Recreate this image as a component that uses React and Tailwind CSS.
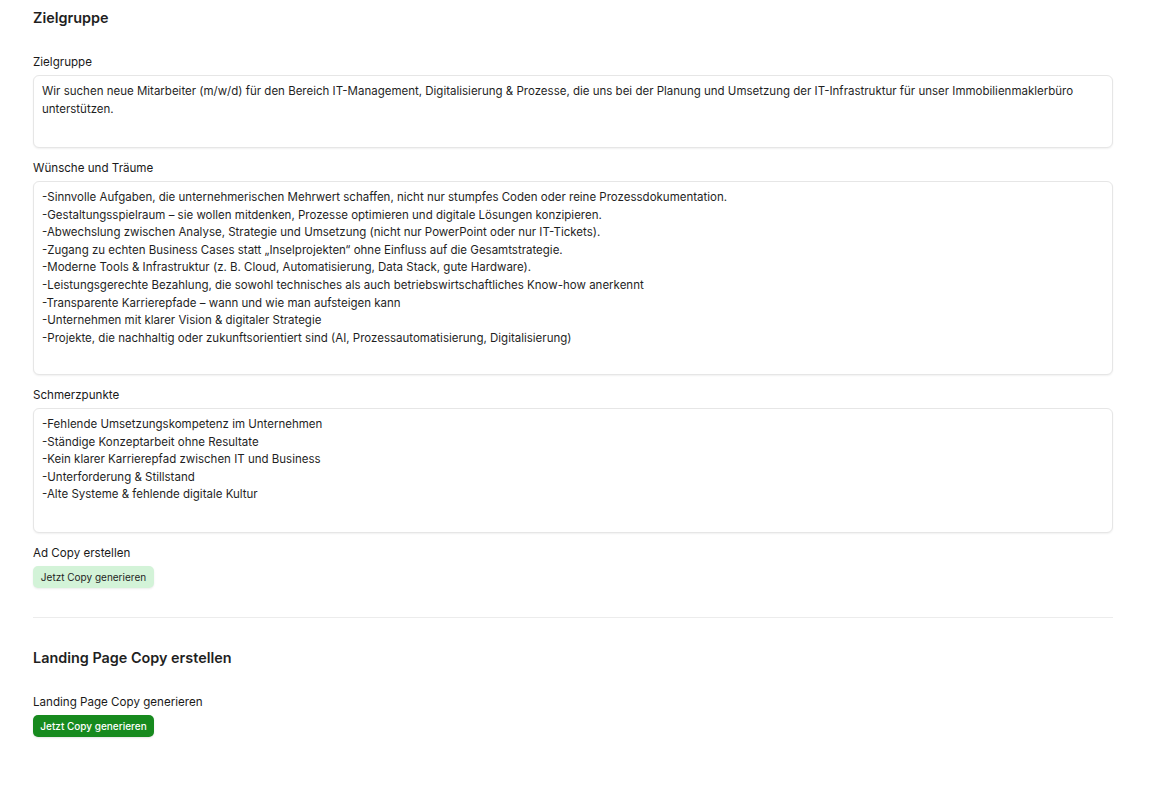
import React from "react";

const wuensche = [
  "-Sinnvolle Aufgaben, die unternehmerischen Mehrwert schaffen, nicht nur stumpfes Coden oder reine Prozessdokumentation.",
  "-Gestaltungsspielraum – sie wollen mitdenken, Prozesse optimieren und digitale Lösungen konzipieren.",
  "-Abwechslung zwischen Analyse, Strategie und Umsetzung (nicht nur PowerPoint oder nur IT-Tickets).",
  "-Zugang zu echten Business Cases statt „Inselprojekten“ ohne Einfluss auf die Gesamtstrategie.",
  "-Moderne Tools & Infrastruktur (z. B. Cloud, Automatisierung, Data Stack, gute Hardware).",
  "-Leistungsgerechte Bezahlung, die sowohl technisches als auch betriebswirtschaftliches Know-how anerkennt",
  "-Transparente Karrierepfade – wann und wie man aufsteigen kann",
  "-Unternehmen mit klarer Vision & digitaler Strategie",
  "-Projekte, die nachhaltig oder zukunftsorientiert sind (AI, Prozessautomatisierung, Digitalisierung)",
];

const schmerz = [
  "-Fehlende Umsetzungskompetenz im Unternehmen",
  "-Ständige Konzeptarbeit ohne Resultate",
  "-Kein klarer Karrierepfad zwischen IT und Business",
  "-Unterforderung & Stillstand",
  "-Alte Systeme & fehlende digitale Kultur",
];

function Label({ children }) {
  return <div className="text-[11.6px] leading-[16px] text-[#1a1a1a]">{children}</div>;
}

function Box({ lines, h }) {
  return (
    <div
      className={`mt-[5px] w-full rounded-[6px] border border-[#e6e6e6] bg-white px-[8px] py-[7px] shadow-[0_1px_2px_rgba(0,0,0,0.06)] text-[11.5px] leading-[17.6px] text-[#1f1f1f] ${h}`}
    >
      {lines.map((l, i) => (
        <div key={i}>{l}</div>
      ))}
    </div>
  );
}

export default function App() {
  return (
    <div
      className="min-h-[801px] bg-white pl-[33px] pr-[50px] pt-[9px]"
      style={{ fontFamily: "Inter, 'Noto Sans', sans-serif" }}
    >
      <div className="w-[1080px]">
        <h2 className="text-[14.4px] leading-[18px] font-semibold text-[#1f1f1f]">Zielgruppe</h2>

        <div className="mt-[27px]">
          <Label>Zielgruppe</Label>
          <Box
            h="h-[73px]"
            lines={[
              "Wir suchen neue Mitarbeiter (m/w/d) für den Bereich IT-Management, Digitalisierung & Prozesse, die uns bei der Planung und Umsetzung der IT-Infrastruktur für unser Immobilienmaklerbüro unterstützen.",
            ]}
          />
        </div>

        <div className="mt-[12px]">
          <Label>Wünsche und Träume</Label>
          <Box h="h-[194px]" lines={wuensche} />
        </div>

        <div className="mt-[12px]">
          <Label>Schmerzpunkte</Label>
          <Box h="h-[125px]" lines={schmerz} />
        </div>

        <div className="mt-[12px]">
          <Label>Ad Copy erstellen</Label>
          <button className="mt-[5px] flex h-[22px] w-[121px] items-center justify-center rounded-[5px] bg-[#d3f3d8] text-[10px] text-[#1f1f1f] shadow-[0_1px_2px_rgba(0,0,0,0.08)]">
            Jetzt Copy generieren
          </button>
        </div>

        <div className="mt-[29px] h-px w-full bg-[#ececec]" />

        <h2 className="mt-[31px] text-[14.4px] leading-[18px] font-semibold text-[#1f1f1f]">
          Landing Page Copy erstellen
        </h2>

        <div className="mt-[27px]">
          <Label>Landing Page Copy generieren</Label>
          <button className="mt-[5px] flex h-[22px] w-[121px] items-center justify-center rounded-[5px] bg-[#178a1e] text-[10px] font-medium text-white shadow-[0_1px_2px_rgba(0,0,0,0.1)]">
            Jetzt Copy generieren
          </button>
        </div>
      </div>
    </div>
  );
}
